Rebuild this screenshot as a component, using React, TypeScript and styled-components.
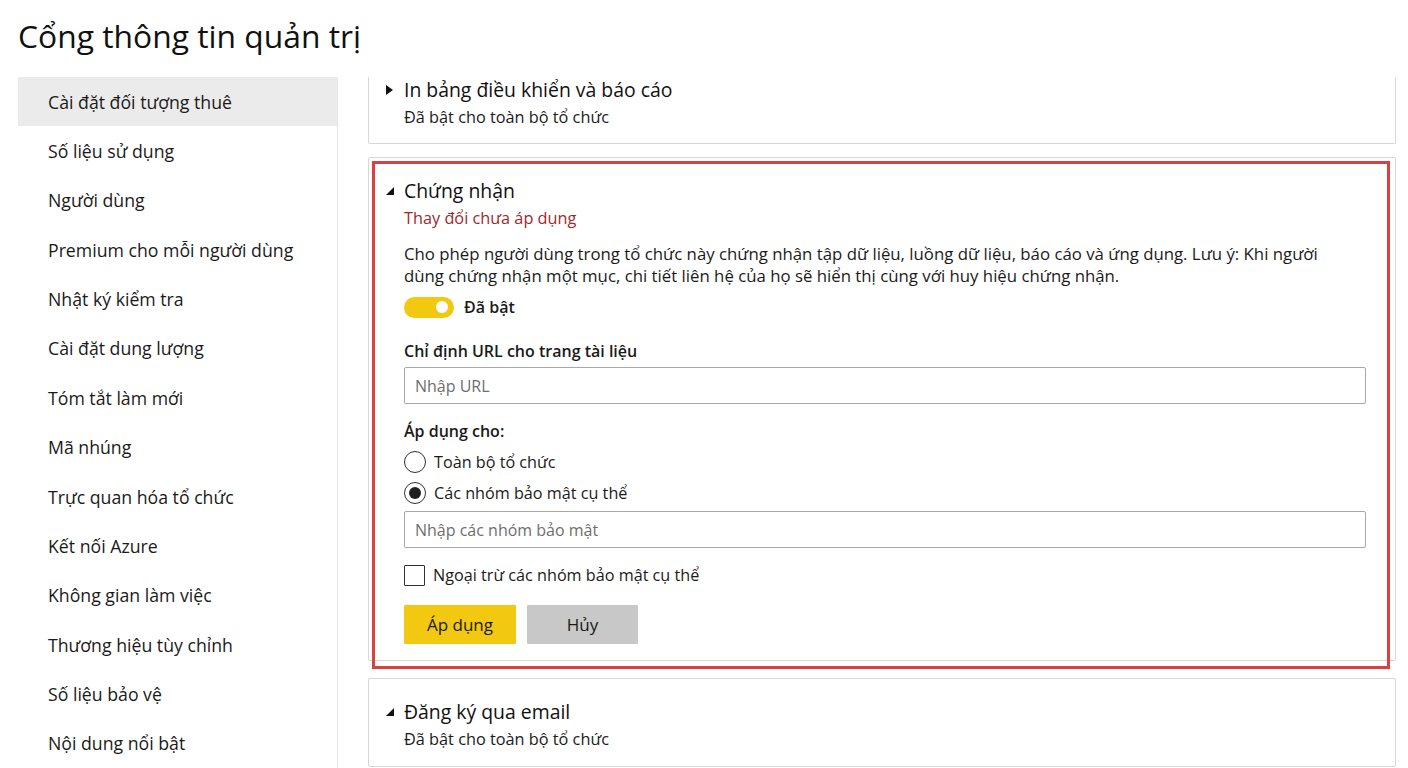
import React, { FC } from 'react';
import styled, { createGlobalStyle } from 'styled-components';

const GlobalStyle = createGlobalStyle`
  html, body {
    margin: 0;
    padding: 0;
    background: #ffffff;
    color: #1b1a19;
    font-family: "Open Sans", "Noto Sans", "Liberation Sans", sans-serif;
  }
  * { box-sizing: border-box; }
`;

const Page = styled.div`
  display: flex;
  flex-direction: column;
  height: 768px;
  overflow: hidden;
`;

const Header = styled.header`
  height: 77px;
  padding: 14px 0 0 18px;
`;

const Title = styled.h1`
  margin: 0;
  font-size: 31.8px;
  font-weight: 400;
  line-height: 44px;
  color: #111;
`;

const Body = styled.div`
  flex: 1;
  display: flex;
  min-height: 0;
`;

const Sidebar = styled.nav`
  width: 320px;
  margin-left: 18px;
  border-right: 1px solid #e6e6e6;
  display: flex;
  flex-direction: column;
`;

const NavItem = styled.div<{ $active?: boolean }>`
  height: 49.5px;
  display: flex;
  align-items: center;
  padding-left: 30px;
  font-size: 17.7px;
  color: #1b1a19;
  background: ${(p) => (p.$active ? '#ebebeb' : 'transparent')};
`;

const Main = styled.main`
  flex: 1;
  min-width: 0;
  overflow: hidden;
  padding: 0 12px 0 30px;
`;

const Stack = styled.div`
  display: flex;
  flex-direction: column;
  gap: 13px;
  margin-top: -1px;
`;

// $cut: the card is scrolled so its top edge sits above the visible area
const Card = styled.section<{ $cut?: boolean }>`
  border: 1px solid #d6d6d6;
  border-top: ${(p) => (p.$cut ? 'none' : '1px solid #d6d6d6')};
  border-radius: ${(p) => (p.$cut ? '0 0 2px 2px' : '2px')};
  background: #fff;
  padding: ${(p) => (p.$cut ? '0 16px 15px' : '19px 16px 16px')};
`;

const Highlight = styled.div`
  position: relative;
  margin-bottom: 4px;
`;

const RedFrame = styled.div`
  position: absolute;
  top: 4px;
  left: 4px;
  right: 6px;
  bottom: -8px;
  border: 3px solid #d8413f;
  pointer-events: none;
`;

const CardHead = styled.div`
  display: flex;
  align-items: center;
  height: 28px;
`;

const Caret = styled.span`
  width: 19px;
  display: flex;
  align-items: center;
`;

const CardTitle = styled.div`
  font-size: 19.4px;
  line-height: 28px;
  color: #111;
`;

const CardBody = styled.div`
  padding: 0 13px 0 19px;
`;

const Status = styled.div<{ $warn?: boolean }>`
  font-size: 16.3px;
  line-height: 22px;
  margin-top: 2px;
  color: ${(p) => (p.$warn ? '#a4262c' : '#1b1a19')};
`;

const Description = styled.p`
  margin: 14px 0 0;
  font-size: 16.8px;
  line-height: 22px;
  color: #1b1a19;
`;

const ToggleRow = styled.div`
  display: flex;
  align-items: center;
  gap: 10px;
  margin-top: 9px;
  height: 22px;
`;

const Toggle = styled.span`
  width: 50px;
  height: 21px;
  border-radius: 11px;
  background: #f2c811;
  display: flex;
  align-items: center;
  justify-content: flex-end;
  padding-right: 6px;
`;

const Knob = styled.span`
  width: 12px;
  height: 12px;
  border-radius: 50%;
  background: #fff;
`;

const ToggleLabel = styled.span`
  font-size: 16px;
  font-weight: 600;
  color: #1b1a19;
`;

const FieldLabel = styled.div<{ $gap: number }>`
  margin-top: ${(p) => p.$gap}px;
  font-size: 16px;
  line-height: 22px;
  font-weight: 600;
  color: #1b1a19;
`;

const TextInput = styled.input`
  display: block;
  width: 100%;
  height: 37px;
  margin-top: 5px;
  border: 1px solid #a8a8a8;
  border-radius: 2px;
  padding: 0 10px;
  font-family: inherit;
  font-size: 16px;
  color: #1b1a19;
  background: #fff;
  outline: none;
  &::placeholder {
    color: #6e6e6e;
  }
`;

const ChoiceRow = styled.label<{ $gap: number }>`
  display: flex;
  align-items: center;
  gap: 8px;
  height: 26px;
  margin-top: ${(p) => p.$gap}px;
  font-size: 16.2px;
  color: #1b1a19;
`;

const Radio = styled.span<{ $checked?: boolean }>`
  width: 22px;
  height: 22px;
  border-radius: 50%;
  border: 1.5px solid #323130;
  display: flex;
  align-items: center;
  justify-content: center;
  &::after {
    content: '';
    width: 12px;
    height: 12px;
    border-radius: 50%;
    background: ${(p) => (p.$checked ? '#201f1e' : 'transparent')};
  }
`;

const Checkbox = styled.span`
  width: 21px;
  height: 21px;
  border: 1.5px solid #323130;
  border-radius: 1px;
`;

const Actions = styled.div`
  display: flex;
  gap: 11px;
  margin-top: 17px;
`;

const Button = styled.button<{ $primary?: boolean }>`
  width: ${(p) => (p.$primary ? 112 : 111)}px;
  height: 39px;
  border: none;
  border-radius: 1px;
  font-family: inherit;
  font-size: 17px;
  color: #1b1a19;
  background: ${(p) => (p.$primary ? '#f2c811' : '#c8c8c8')};
`;

const CaretRight: FC = () => (
  <svg width="9" height="12" viewBox="0 0 9 12">
    <path d="M1 1 L8 6 L1 11 Z" fill="#111" />
  </svg>
);

const CaretOpen: FC = () => (
  <svg width="10" height="10" viewBox="0 0 10 10">
    <path d="M9 1 L9 9 L1 9 Z" fill="#111" />
  </svg>
);

const navItems = [
  'Cài đặt đối tượng thuê',
  'Số liệu sử dụng',
  'Người dùng',
  'Premium cho mỗi người dùng',
  'Nhật ký kiểm tra',
  'Cài đặt dung lượng',
  'Tóm tắt làm mới',
  'Mã nhúng',
  'Trực quan hóa tổ chức',
  'Kết nối Azure',
  'Không gian làm việc',
  'Thương hiệu tùy chỉnh',
  'Số liệu bảo vệ',
  'Nội dung nổi bật',
];

const App: FC = function App() {
  return (
    <Page>
      <GlobalStyle />
      <Header>
        <Title>Cổng thông tin quản trị</Title>
      </Header>
      <Body>
        <Sidebar>
          {navItems.map((item, i) => (
            <NavItem key={item} $active={i === 0}>{item}</NavItem>
          ))}
        </Sidebar>

        <Main>
          <Stack>
            <Card $cut>
              <CardHead>
                <Caret><CaretRight /></Caret>
                <CardTitle>In bảng điều khiển và báo cáo</CardTitle>
              </CardHead>
              <CardBody>
                <Status>Đã bật cho toàn bộ tổ chức</Status>
              </CardBody>
            </Card>

            <Highlight>
              <Card>
                <CardHead>
                  <Caret><CaretOpen /></Caret>
                  <CardTitle>Chứng nhận</CardTitle>
                </CardHead>
                <CardBody>
                  <Status $warn>Thay đổi chưa áp dụng</Status>
                  <Description>
                    Cho phép người dùng trong tổ chức này chứng nhận tập dữ liệu, luồng dữ liệu, báo cáo và ứng dụng. Lưu ý: Khi người
                    <br />
                    dùng chứng nhận một mục, chi tiết liên hệ của họ sẽ hiển thị cùng với huy hiệu chứng nhận.
                  </Description>
                  <ToggleRow>
                    <Toggle><Knob /></Toggle>
                    <ToggleLabel>Đã bật</ToggleLabel>
                  </ToggleRow>

                  <FieldLabel $gap={22}>Chỉ định URL cho trang tài liệu</FieldLabel>
                  <TextInput placeholder="Nhập URL" />

                  <FieldLabel $gap={16}>Áp dụng cho:</FieldLabel>
                  <ChoiceRow $gap={7}>
                    <Radio />
                    Toàn bộ tổ chức
                  </ChoiceRow>
                  <ChoiceRow $gap={5}>
                    <Radio $checked />
                    Các nhóm bảo mật cụ thể
                  </ChoiceRow>
                  <TextInput placeholder="Nhập các nhóm bảo mật" />

                  <ChoiceRow $gap={14}>
                    <Checkbox />
                    Ngoại trừ các nhóm bảo mật cụ thể
                  </ChoiceRow>

                  <Actions>
                    <Button $primary>Áp dụng</Button>
                    <Button>Hủy</Button>
                  </Actions>
                </CardBody>
              </Card>
              <RedFrame />
            </Highlight>

            <Card>
              <CardHead>
                <Caret><CaretOpen /></Caret>
                <CardTitle>Đăng ký qua email</CardTitle>
              </CardHead>
              <CardBody>
                <Status>Đã bật cho toàn bộ tổ chức</Status>
              </CardBody>
            </Card>
          </Stack>
        </Main>
      </Body>
    </Page>
  );
};

export default App;
